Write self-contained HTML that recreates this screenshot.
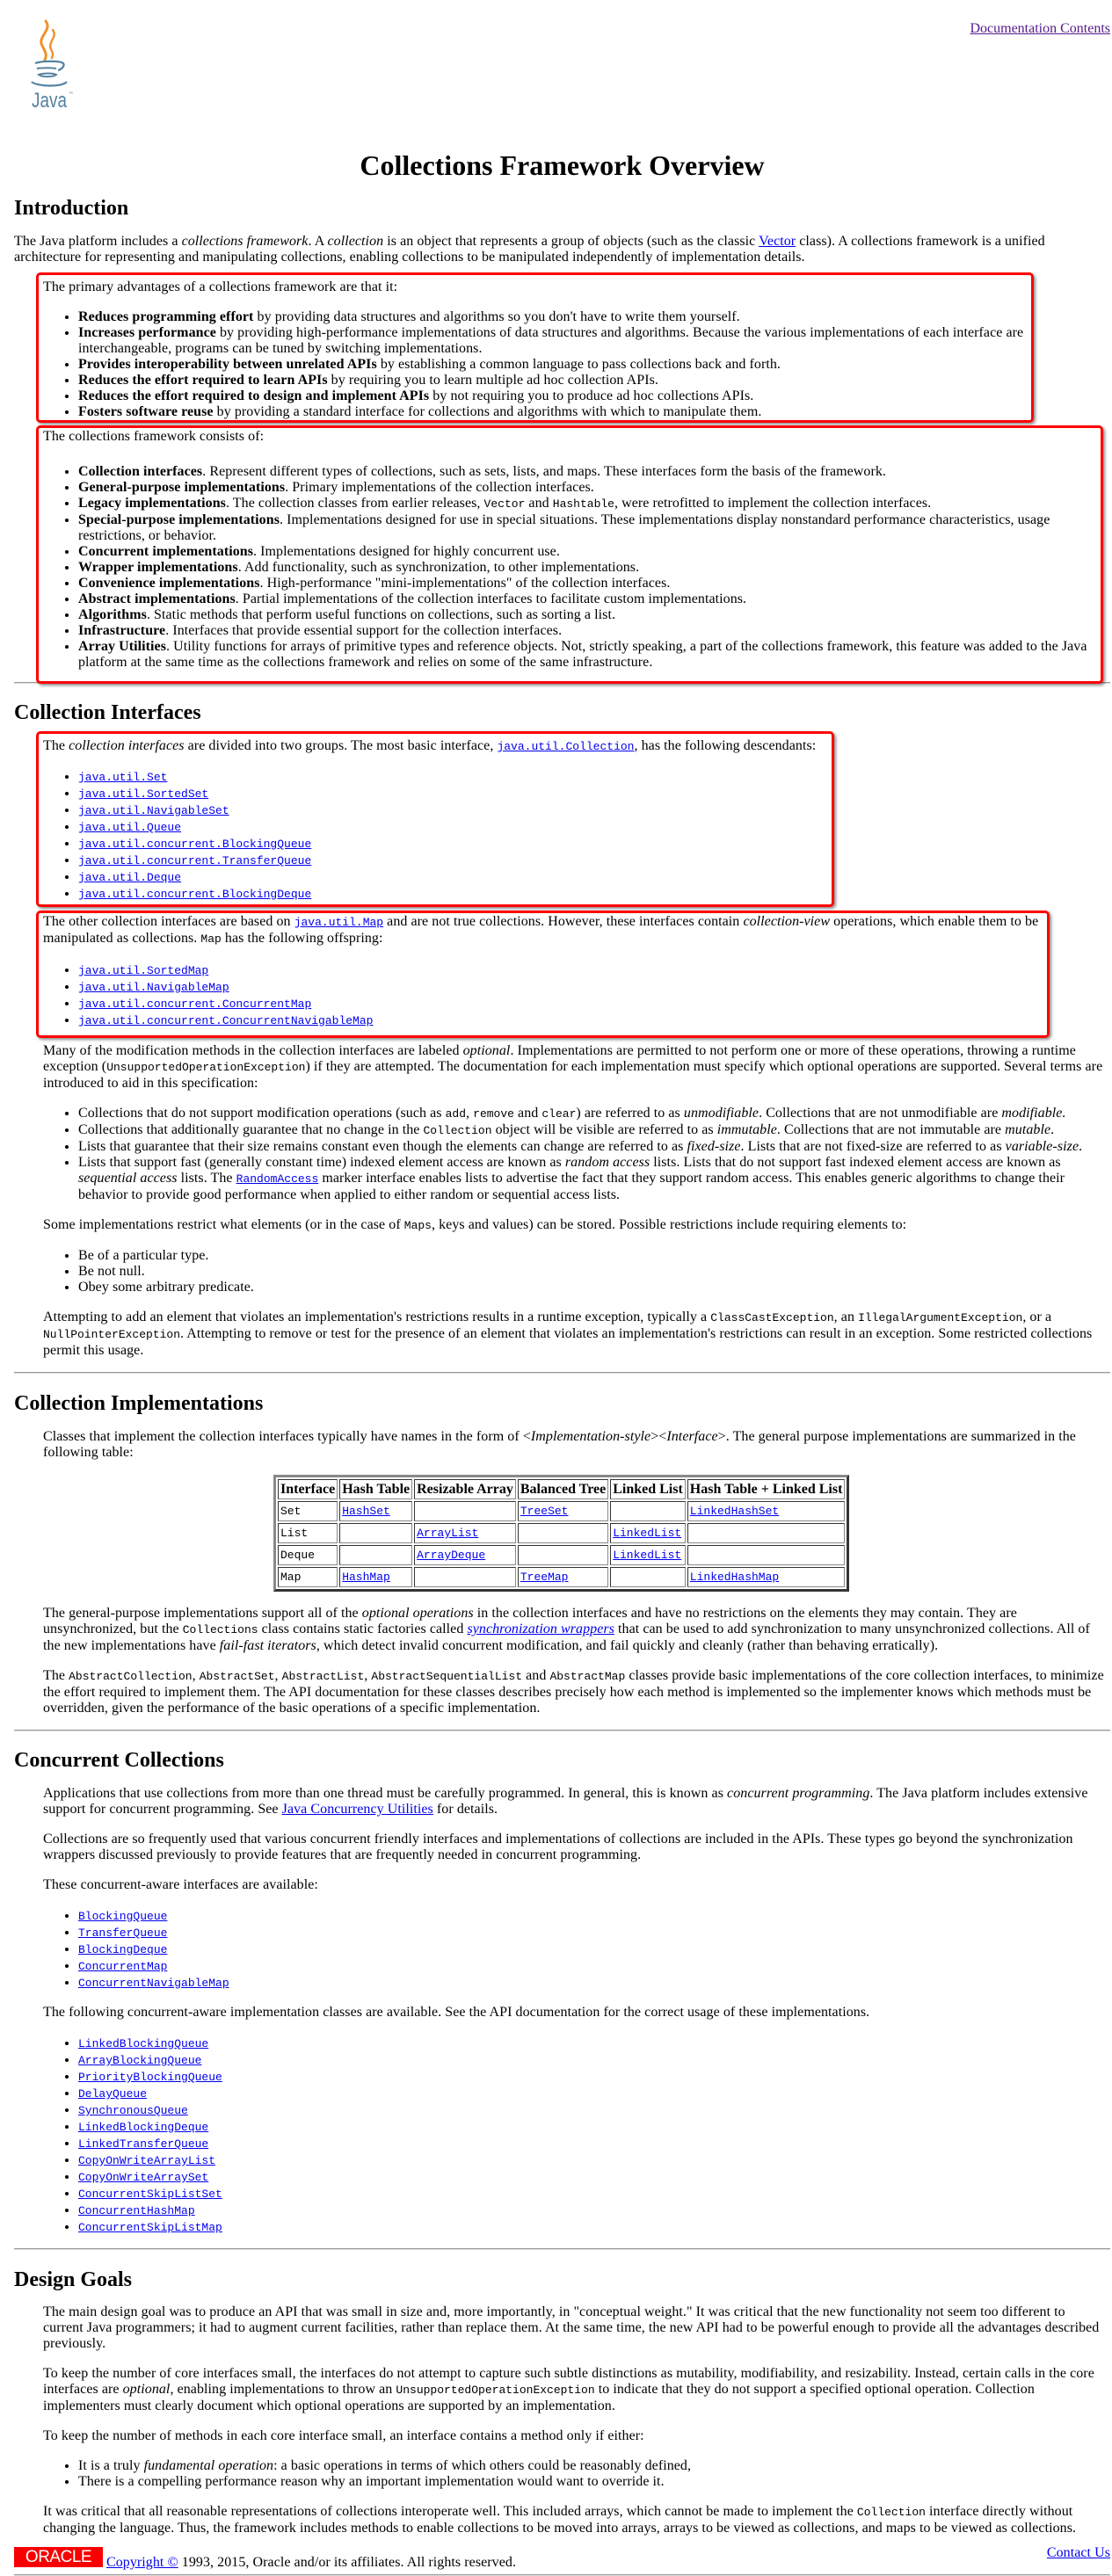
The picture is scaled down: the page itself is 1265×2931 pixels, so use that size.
<!DOCTYPE html>
<html><head><meta charset="utf-8">
<style>
html,body{margin:0;padding:0;background:#fff}
body{font-family:"Liberation Serif",serif;font-size:16px;line-height:18px;color:#000;width:1265px;height:2925px;position:relative;overflow:hidden;letter-spacing:0.06px}
a{color:#0000ee}
code,tt{font-family:"Liberation Mono",monospace;font-size:13px;letter-spacing:0}
#wrap{position:absolute;left:16px;top:0;width:1247px}
h1{font-size:32px;font-weight:bold;line-height:36px;text-align:center;margin:170px 0 0 0;letter-spacing:0}
h2{font-size:24px;font-weight:bold;line-height:28px;margin:0;letter-spacing:0}
p{margin:0}
ul{margin:0;padding-left:40px}
.sec{margin-left:33px;margin-right:6px}
.box{box-sizing:border-box;margin-left:-8px;border:3px solid #f00;border-radius:5px;box-shadow:2px 2px 3px rgba(0,0,0,.45);padding:5px 5px 0 5px;position:relative;z-index:2;background:transparent}
.box p,.box ul{margin-right:-8px}
hr{border:0;border-top:1px solid #9a9a9a;border-bottom:1px solid #dcdcdc;height:0;margin:0}
table.t{border:3px outset #888;border-spacing:2px;margin-left:262px;letter-spacing:0}
table.t th,table.t td{border:1px inset #888;padding:1px 2px;text-align:left;height:19px;white-space:nowrap}
table.t th{font-weight:bold}
</style></head>
<body>
<svg style="position:absolute;left:28px;top:22px" width="64" height="106" viewBox="0 0 64 106">
 <path d="M24 2 C32 12 14 20 20 30 C23 36 26 40 23 46" fill="none" stroke="#f0922b" stroke-width="3" stroke-linecap="round"/>
 <path d="M32 12 C38 20 26 26 30 34 C32 38 33 40 31 44" fill="none" stroke="#f0922b" stroke-width="2.4" stroke-linecap="round"/>
 <path d="M12 50 C20 47 40 47 44 50 C46 53 42 57 38 58" fill="none" stroke="#5382a1" stroke-width="2.2"/>
 <path d="M14 56 C20 55 32 55 36 56" fill="none" stroke="#5382a1" stroke-width="2"/>
 <path d="M16 63 C22 61 32 61 36 63 C32 66 20 66 16 63Z" fill="none" stroke="#5382a1" stroke-width="2"/>
 <path d="M8 71 C12 76 42 78 48 71" fill="none" stroke="#5382a1" stroke-width="2.2"/>
 <text x="8" y="100" font-family="Liberation Sans,sans-serif" font-size="24" fill="#5382a1" textLength="40" lengthAdjust="spacingAndGlyphs">Java</text>
 <text x="50" y="86" font-family="Liberation Sans,sans-serif" font-size="5" fill="#5382a1">™</text>
</svg>
<a href="#" style="position:absolute;right:2px;top:24px;color:#551a8b;letter-spacing:0">Documentation Contents</a>

<div id="wrap">
<h1>Collections Framework Overview</h1>
<h2 style="margin-top:17px">Introduction</h2>
<p style="margin-top:15px">The Java platform includes a <i>collections framework</i>. A <i>collection</i> is an object that represents a group of objects (such as the classic <a href="#">Vector</a> class). A collections framework is a unified<br>architecture for representing and manipulating collections, enabling collections to be manipulated independently of implementation details.</p>

<div class="sec">
<div class="box" style="width:1135px;margin-top:8px;padding-bottom:0">
<p>The primary advantages of a collections framework are that it:</p>
<ul style="margin-top:16px">
<li><b>Reduces programming effort</b> by providing data structures and algorithms so you don't have to write them yourself.</li>
<li><b>Increases performance</b> by providing high-performance implementations of data structures and algorithms. Because the various implementations of each interface are interchangeable, programs can be tuned by switching implementations.</li>
<li><b>Provides interoperability between unrelated APIs</b> by establishing a common language to pass collections back and forth.</li>
<li><b>Reduces the effort required to learn APIs</b> by requiring you to learn multiple ad hoc collection APIs.</li>
<li><b>Reduces the effort required to design and implement APIs</b> by not requiring you to produce ad hoc collections APIs.</li>
<li><b>Fosters software reuse</b> by providing a standard interface for collections and algorithms with which to manipulate them.</li>
</ul>
</div>
<div class="box" style="width:1214px;margin-top:3px;padding-top:1px;padding-bottom:12px">
<p>The collections framework consists of:</p>
<ul style="margin-top:22px">
<li><b>Collection interfaces</b>. Represent different types of collections, such as sets, lists, and maps. These interfaces form the basis of the framework.</li>
<li><b>General-purpose implementations</b>. Primary implementations of the collection interfaces.</li>
<li><b>Legacy implementations</b>. The collection classes from earlier releases, <code>Vector</code> and <code>Hashtable</code>, were retrofitted to implement the collection interfaces.</li>
<li><b>Special-purpose implementations</b>. Implementations designed for use in special situations. These implementations display nonstandard performance characteristics, usage restrictions, or behavior.</li>
<li><b>Concurrent implementations</b>. Implementations designed for highly concurrent use.</li>
<li><b>Wrapper implementations</b>. Add functionality, such as synchronization, to other implementations.</li>
<li><b>Convenience implementations</b>. High-performance "mini-implementations" of the collection interfaces.</li>
<li><b>Abstract implementations</b>. Partial implementations of the collection interfaces to facilitate custom implementations.</li>
<li><b>Algorithms</b>. Static methods that perform useful functions on collections, such as sorting a list.</li>
<li><b>Infrastructure</b>. Interfaces that provide essential support for the collection interfaces.</li>
<li><b>Array Utilities</b>. Utility functions for arrays of primitive types and reference objects. Not, strictly speaking, a part of the collections framework, this feature was added to the Java platform at the same time as the collections framework and relies on some of the same infrastructure.</li>
</ul>
</div>
</div>
<hr style="margin-top:-2px">

<h2 style="margin-top:19px">Collection Interfaces</h2>
<div class="sec">
<div class="box" style="width:908px;margin-top:7px;padding-bottom:2px">
<p>The <i>collection interfaces</i> are divided into two groups. The most basic interface, <a href="#"><code>java.util.Collection</code></a>, has the following descendants:</p>
<ul style="margin-top:16px">
<li><a href="#"><code>java.util.Set</code></a></li>
<li><a href="#"><code>java.util.SortedSet</code></a></li>
<li><a href="#"><code>java.util.NavigableSet</code></a></li>
<li><a href="#"><code>java.util.Queue</code></a></li>
<li><a href="#"><code>java.util.concurrent.BlockingQueue</code></a></li>
<li><a href="#"><code>java.util.concurrent.TransferQueue</code></a></li>
<li><a href="#"><code>java.util.Deque</code></a></li>
<li><a href="#"><code>java.util.concurrent.BlockingDeque</code></a></li>
</ul>
</div>
<div class="box" style="width:1153px;margin-top:4px;padding-top:1px;padding-bottom:7px">
<p>The other collection interfaces are based on <a href="#"><code>java.util.Map</code></a> and are not true collections. However, these interfaces contain <i>collection-view</i> operations, which enable them to be manipulated as collections. <code>Map</code> has the following offspring:</p>
<ul style="margin-top:17px">
<li><a href="#"><code>java.util.SortedMap</code></a></li>
<li><a href="#"><code>java.util.NavigableMap</code></a></li>
<li><a href="#"><code>java.util.concurrent.ConcurrentMap</code></a></li>
<li><a href="#"><code>java.util.concurrent.ConcurrentNavigableMap</code></a></li>
</ul>
</div>
<p style="margin-top:6px">Many of the modification methods in the collection interfaces are labeled <i>optional</i>. Implementations are permitted to not perform one or more of these operations, throwing a runtime exception (<code>UnsupportedOperationException</code>) if they are attempted. The documentation for each implementation must specify which optional operations are supported. Several terms are introduced to aid in this specification:</p>
<ul style="margin-top:16px">
<li>Collections that do not support modification operations (such as <code>add</code>, <code>remove</code> and <code>clear</code>) are referred to as <i>unmodifiable</i>. Collections that are not unmodifiable are <i>modifiable.</i></li>
<li>Collections that additionally guarantee that no change in the <code>Collection</code> object will be visible are referred to as <i>immutable</i>. Collections that are not immutable are <i>mutable</i>.</li>
<li>Lists that guarantee that their size remains constant even though the elements can change are referred to as <i>fixed-size</i>. Lists that are not fixed-size are referred to as <i>variable-size</i>.</li>
<li>Lists that support fast (generally constant time) indexed element access are known as <i>random access</i> lists. Lists that do not support fast indexed element access are known as <i>sequential access</i> lists. The <a href="#"><code>RandomAccess</code></a> marker interface enables lists to advertise the fact that they support random access. This enables generic algorithms to change their behavior to provide good performance when applied to either random or sequential access lists.</li>
</ul>
<p style="margin-top:16px">Some implementations restrict what elements (or in the case of <code>Maps</code>, keys and values) can be stored. Possible restrictions include requiring elements to:</p>
<ul style="margin-top:16px">
<li>Be of a particular type.</li>
<li>Be not null.</li>
<li>Obey some arbitrary predicate.</li>
</ul>
<p style="margin-top:16px">Attempting to add an element that violates an implementation's restrictions results in a runtime exception, typically a <code>ClassCastException</code>, an <code>IllegalArgumentException</code>, or a <code>NullPointerException</code>. Attempting to remove or test for the presence of an element that violates an implementation's restrictions can result in an exception. Some restricted collections permit this usage.</p>
</div>
<hr style="margin-top:15px">

<h2 style="margin-top:20px">Collection Implementations</h2>
<div class="sec">
<p style="margin-top:15px">Classes that implement the collection interfaces typically have names in the form of &lt;<i>Implementation-style</i>&gt;&lt;<i>Interface</i>&gt;. The general purpose implementations are summarized in the following table:</p>
<table class="t" style="margin-top:16px">
<tr><th>Interface</th><th>Hash Table</th><th>Resizable Array</th><th>Balanced Tree</th><th>Linked List</th><th>Hash Table + Linked List</th></tr>
<tr><td><code>Set</code></td><td><a href="#"><code>HashSet</code></a></td><td></td><td><a href="#"><code>TreeSet</code></a></td><td></td><td><a href="#"><code>LinkedHashSet</code></a></td></tr>
<tr><td><code>List</code></td><td></td><td><a href="#"><code>ArrayList</code></a></td><td></td><td><a href="#"><code>LinkedList</code></a></td><td></td></tr>
<tr><td><code>Deque</code></td><td></td><td><a href="#"><code>ArrayDeque</code></a></td><td></td><td><a href="#"><code>LinkedList</code></a></td><td></td></tr>
<tr><td><code>Map</code></td><td><a href="#"><code>HashMap</code></a></td><td></td><td><a href="#"><code>TreeMap</code></a></td><td></td><td><a href="#"><code>LinkedHashMap</code></a></td></tr>
</table>
<p style="margin-top:16px">The general-purpose implementations support all of the <i>optional operations</i> in the collection interfaces and have no restrictions on the elements they may contain. They are<br>unsynchronized, but the <code>Collections</code> class contains static factories called <a href="#"><i>synchronization wrappers</i></a> that can be used to add synchronization to many unsynchronized collections. All of the new implementations have <i>fail-fast iterators</i>, which detect invalid concurrent modification, and fail quickly and cleanly (rather than behaving erratically).</p>
<p style="margin-top:16px">The <code>AbstractCollection</code>, <code>AbstractSet</code>, <code>AbstractList</code>, <code>AbstractSequentialList</code> and <code>AbstractMap</code> classes provide basic implementations of the core collection interfaces, to minimize the effort required to implement them. The API documentation for these classes describes precisely how each method is implemented so the implementer knows which methods must be overridden, given the performance of the basic operations of a specific implementation.</p>
</div>
<hr style="margin-top:15px">

<h2 style="margin-top:19px">Concurrent Collections</h2>
<div class="sec">
<p style="margin-top:15px">Applications that use collections from more than one thread must be carefully programmed. In general, this is known as <i>concurrent programming</i>. The Java platform includes extensive support for concurrent programming. See <a href="#">Java Concurrency Utilities</a> for details.</p>
<p style="margin-top:16px">Collections are so frequently used that various concurrent friendly interfaces and implementations of collections are included in the APIs. These types go beyond the synchronization wrappers discussed previously to provide features that are frequently needed in concurrent programming.</p>
<p style="margin-top:16px">These concurrent-aware interfaces are available:</p>
<ul style="margin-top:17px">
<li><a href="#"><code>BlockingQueue</code></a></li>
<li><a href="#"><code>TransferQueue</code></a></li>
<li><a href="#"><code>BlockingDeque</code></a></li>
<li><a href="#"><code>ConcurrentMap</code></a></li>
<li><a href="#"><code>ConcurrentNavigableMap</code></a></li>
</ul>
<p style="margin-top:15px">The following concurrent-aware implementation classes are available. See the API documentation for the correct usage of these implementations.</p>
<ul style="margin-top:17px">
<li><a href="#"><code>LinkedBlockingQueue</code></a></li>
<li><a href="#"><code>ArrayBlockingQueue</code></a></li>
<li><a href="#"><code>PriorityBlockingQueue</code></a></li>
<li><a href="#"><code>DelayQueue</code></a></li>
<li><a href="#"><code>SynchronousQueue</code></a></li>
<li><a href="#"><code>LinkedBlockingDeque</code></a></li>
<li><a href="#"><code>LinkedTransferQueue</code></a></li>
<li><a href="#"><code>CopyOnWriteArrayList</code></a></li>
<li><a href="#"><code>CopyOnWriteArraySet</code></a></li>
<li><a href="#"><code>ConcurrentSkipListSet</code></a></li>
<li><a href="#"><code>ConcurrentHashMap</code></a></li>
<li><a href="#"><code>ConcurrentSkipListMap</code></a></li>
</ul>
</div>
<hr style="margin-top:14px">

<h2 style="margin-top:20px">Design Goals</h2>
<div class="sec">
<p style="margin-top:14px">The main design goal was to produce an API that was small in size and, more importantly, in "conceptual weight." It was critical that the new functionality not seem too different to current Java programmers; it had to augment current facilities, rather than replace them. At the same time, the new API had to be powerful enough to provide all the advantages described previously.</p>
<p style="margin-top:16px">To keep the number of core interfaces small, the interfaces do not attempt to capture such subtle distinctions as mutability, modifiability, and resizability. Instead, certain calls in the core interfaces are <i>optional</i>, enabling implementations to throw an <code>UnsupportedOperationException</code> to indicate that they do not support a specified optional operation. Collection implementers must clearly document which optional operations are supported by an implementation.</p>
<p style="margin-top:16px">To keep the number of methods in each core interface small, an interface contains a method only if either:</p>
<ul style="margin-top:16px">
<li>It is a truly <i>fundamental operation</i>: a basic operations in terms of which others could be reasonably defined,</li>
<li>There is a compelling performance reason why an important implementation would want to override it.</li>
</ul>
<p style="margin-top:16px">It was critical that all reasonable representations of collections interoperate well. This included arrays, which cannot be made to implement the <code>Collection</code> interface directly without changing the language. Thus, the framework includes methods to enable collections to be moved into arrays, arrays to be viewed as collections, and maps to be viewed as collections.</p>
</div>
<hr style="margin-top:43px">
</div>

<div style="position:absolute;left:16px;top:2898px;width:101px;height:23px;background:#f80000;color:#fff;font-family:'Liberation Sans',sans-serif;font-size:19px;line-height:23px;text-align:center;letter-spacing:-0.5px">ORACLE</div>
<div style="position:absolute;left:121px;top:2907px;white-space:nowrap"><a href="#">Copyright ©</a> 1993, 2015, Oracle and/or its affiliates. All rights reserved.</div>
<a href="#" style="position:absolute;right:2px;top:2896px">Contact Us</a>
</body></html>
